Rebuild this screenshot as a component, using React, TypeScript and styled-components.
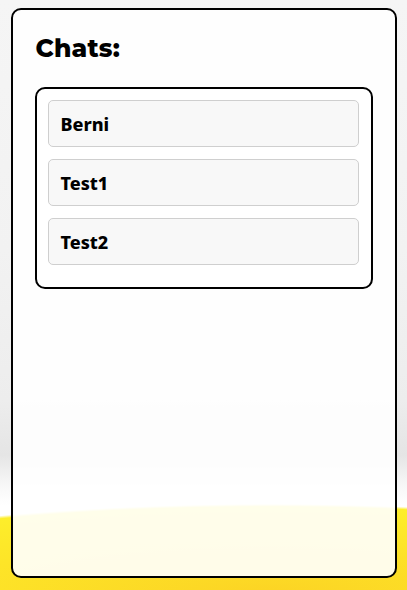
import React from "react";
import styled, { createGlobalStyle } from "styled-components";

const Global = createGlobalStyle`
  html, body { margin: 0; padding: 0; }
  body {
    width: 407px;
    height: 590px;
    overflow: hidden;
    font-family: "Inter", "Liberation Sans", sans-serif;
    background:
      radial-gradient(ellipse 540px 88px at 66% 592px, #fcd424 0%, #fde528 60%, #fdee2b 97%, rgba(253,238,43,0) 100%),
      linear-gradient(to bottom, #f5f5f5 0px, #f2f2f2 250px, #ededed 400px, #e5e5e5 455px, #f7f7f7 485px, #ffffff 505px, #ffffff 590px);
    background-repeat: no-repeat;
  }
`;

const Page = styled.div`
  display: flex;
  justify-content: center;
  padding-top: 8px;
`;

const Card = styled.section`
  box-sizing: border-box;
  width: 386px;
  height: 570px;
  border: 2px solid #000;
  border-radius: 10px;
  background: rgba(255, 255, 255, 0.9);
  padding: 22px 22px;
`;

const Title = styled.h2`
  margin: 0 0 0 1px;
  font-family: "Montserrat", "Inter", sans-serif;
  font-weight: 800;
  font-size: 25px;
  line-height: 32px;
  color: #000;
  letter-spacing: 0.2px;
`;

const List = styled.div`
  margin-top: 23px;
  box-sizing: border-box;
  width: 338px;
  border: 2px solid #000;
  border-radius: 10px;
  background: #fff;
  padding: 11px 12px 22px 11px;
  display: flex;
  flex-direction: column;
  gap: 12px;
`;

const Item = styled.div`
  box-sizing: border-box;
  height: 47px;
  border: 1px solid #cfcfcf;
  border-radius: 5px;
  background: #f8f8f8;
  display: flex;
  align-items: center;
  padding: 0 12px;
  font-family: "Noto Sans", "Liberation Sans", sans-serif;
  font-weight: 800;
  font-size: 18px;
  color: #000;
`;

const chats = ["Berni", "Test1", "Test2"];

export default function App() {
  return (
    <>
      <Global />
      <Page>
        <Card>
          <Title>Chats:</Title>
          <List>
            {chats.map((c) => (
              <Item key={c}>{c}</Item>
            ))}
          </List>
        </Card>
      </Page>
    </>
  );
}
